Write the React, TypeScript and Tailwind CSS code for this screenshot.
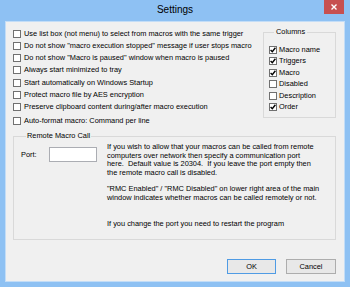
import React from "react";

const font = { fontFamily: '"Liberation Sans", Arial, sans-serif' };

const CheckBox = ({ checked }: { checked?: boolean }) => (
  <span className="w-[8px] h-[8px] shrink-0 border border-[#707070] bg-white flex items-center justify-center">
    {checked && (
      <svg width="6" height="6" viewBox="0 0 6 6">
        <path d="M0.6 3.1 L2.3 4.8 L5.4 0.8" fill="none" stroke="#000" strokeWidth="1.4" />
      </svg>
    )}
  </span>
);

const Option = ({ label, checked, className = "h-[12px]" }: { label: string; checked?: boolean; className?: string }) => (
  <div className={`flex items-center gap-[3px] ${className}`}>
    <CheckBox checked={checked} />
    <span className="whitespace-nowrap text-black">{label}</span>
  </div>
);

const ColumnOption = ({ label, checked }: { label: string; checked?: boolean }) => (
  <div className="flex items-center gap-[2px] h-[11.5px]">
    <CheckBox checked={checked} />
    <span className="whitespace-nowrap text-black">{label}</span>
  </div>
);

const App = () => {
  return (
    <div
      className="w-[350px] h-[287px] bg-[#8ec1f3] px-[5px] pb-[5px] flex flex-col text-[7.4px] text-black leading-[8px]"
      style={font}
    >
      {/* title bar */}
      <div className="h-[21px] relative flex items-center justify-center">
        <span className="text-[10px] text-black leading-[12px] -mt-[1px]">Settings</span>
        <div className="absolute right-[1px] top-0 w-[20px] h-[14px] bg-[#c75050] flex items-center justify-center">
          <svg width="6" height="6" viewBox="0 0 6 6">
            <path d="M0.5 0.5 L5.5 5.5 M5.5 0.5 L0.5 5.5" stroke="#fff" strokeWidth="1.4" />
          </svg>
        </div>
      </div>

      {/* dialog body */}
      <div className="h-[261px] border border-[#c3ddf7] bg-[#f0f0f0] pl-[7px] pr-[8px] pt-[6px] flex flex-col">
        <div className="flex">
          <div className="flex flex-col">
            <Option label="Use list box (not menu) to select from macros with the same trigger" />
            <Option label={'Do not show "macro execution stopped" message if user stops macro'} />
            <Option label={'Do not show "Macro is paused" window when macro is paused'} />
            <Option label="Always start minimized to tray" />
            <Option label="Start automatically on Windows Startup" className="h-[12px] mt-[1px]" />
            <Option label="Protect macro file by AES encryption" className="h-[11px]" />
            <Option label="Preserve clipboard content during/after macro execution" className="h-[12px] mt-[1px]" />
            <Option label="Auto-format macro: Command per line" className="h-[12px] mt-[2px]" />
          </div>

          <fieldset className="ml-auto w-[73px] h-[90px] border border-[#d9d9d9] pl-[5px]">
            <legend className="ml-[5px] px-[2px] leading-[8px] text-black">Columns</legend>
            <div className="pt-[8px] flex flex-col">
              <ColumnOption label="Macro name" checked />
              <ColumnOption label="Triggers" checked />
              <ColumnOption label="Macro" checked />
              <ColumnOption label="Disabled" />
              <ColumnOption label="Description" />
              <ColumnOption label="Order" checked />
            </div>
          </fieldset>
        </div>

        <fieldset className="mt-[5px] h-[108px] border border-[#d9d9d9] pl-[7px] pr-[4px]">
          <legend className="ml-[5px] px-[1px] leading-[8px] text-black">Remote Macro Call</legend>
          <div className="flex items-start pt-[3px]">
            <div className="flex items-center mt-[4px]">
              <span className="w-[28px] text-black">Port:</span>
              <div className="w-[48px] h-[15px] bg-white border border-[#abadb3]" />
            </div>
            <div className="ml-[10px] flex flex-col text-black">
              <p className="leading-[8.6px] whitespace-nowrap">
                If you wish to allow that your macros can be called from remote
                <br />
                computers over network then specify a communication port
                <br />
                here.&nbsp; Default value is 20304.&nbsp; If you leave the port empty then
                <br />
                the remote macro call is disabled.
              </p>
              <p className="mt-[7px] leading-[9px] whitespace-nowrap">
                "RMC Enabled" / "RMC Disabled" on lower right area of the main
                <br />
                window indicates whether macros can be called remotely or not.
              </p>
              <p className="mt-[17px] leading-[9px] whitespace-nowrap">
                If you change the port you need to restart the program
              </p>
            </div>
          </div>
        </fieldset>

        <div className="mt-[19px] flex justify-end gap-[10px]">
          <button className="w-[49px] h-[15px] border border-[#4f9be4] bg-[#e8e8e8] text-[7.4px] leading-[8px] text-black">
            OK
          </button>
          <button className="w-[50px] h-[15px] border border-[#adadad] bg-[#e8e8e8] text-[7.4px] leading-[8px] text-black">
            Cancel
          </button>
        </div>
      </div>
    </div>
  );
};

export default App;
